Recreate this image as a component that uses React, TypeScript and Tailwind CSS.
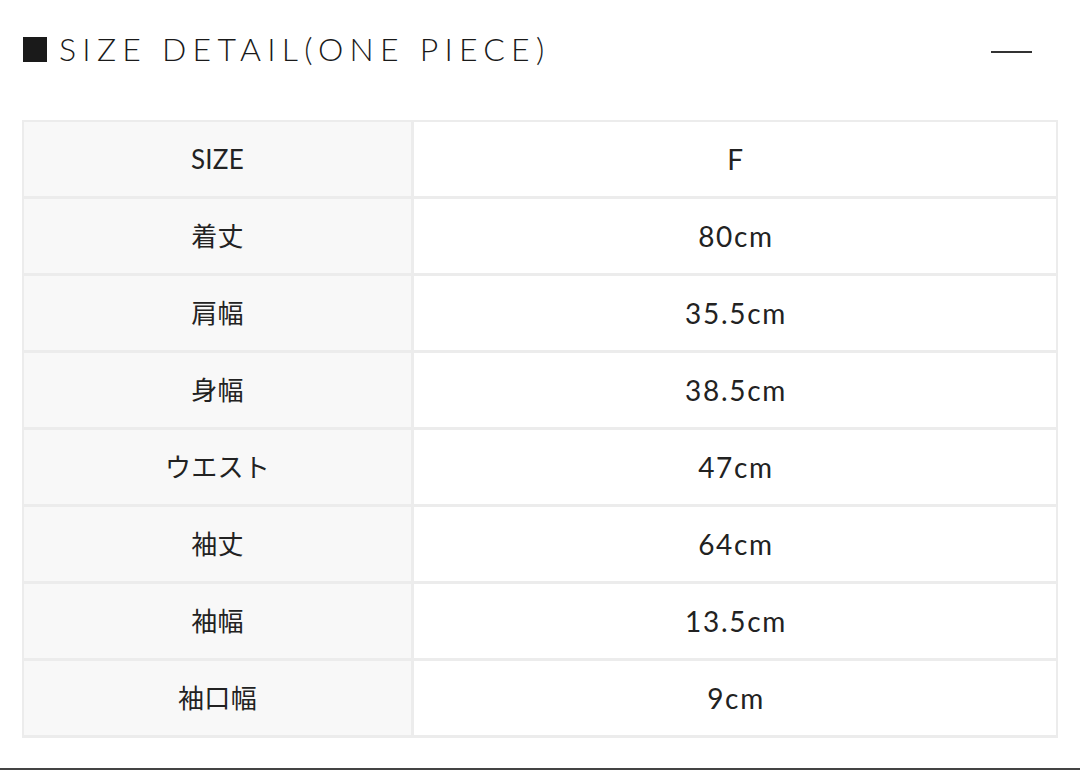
import React from "react";

const rows: [string, string][] = [
  ["SIZE", "F"],
  ["着丈", "80cm"],
  ["肩幅", "35.5cm"],
  ["身幅", "38.5cm"],
  ["ウエスト", "47cm"],
  ["袖丈", "64cm"],
  ["袖幅", "13.5cm"],
  ["袖口幅", "9cm"],
];

export default function App() {
  return (
    <div
      className="w-[1080px] h-[770px] bg-white relative overflow-hidden text-[#222]"
      style={{ fontFamily: '"Lato", "Noto Sans CJK JP", sans-serif' }}
    >
      <div className="flex items-center h-[96px] pl-[23px] pr-[48px]">
        <div className="w-[24px] h-[25px] bg-[#1a1a1a] mt-[2px]" />
        <div className="ml-[12px] text-[32px] font-light tracking-[0.195em] leading-none text-[#1a1a1a] mt-[2px]">
          SIZE DETAIL(ONE PIECE)
        </div>
        <div className="flex-1" />
        <div className="w-[41px] h-[2px] bg-[#333] mt-[8px]" />
      </div>
      <div className="mx-[22px] mt-[24px] border-[2px] border-[#ececec] border-b-0">
        {rows.map(([k, v], i) => (
          <div key={i} className="flex h-[77px] border-b-[3px] border-[#ececec]">
            <div className="w-[390px] bg-[#f8f8f8] border-r-[3px] border-[#ececec] flex items-center justify-center text-[26px] font-normal tracking-[0.01em]">
              {k}
            </div>
            <div className="flex-1 flex items-center justify-center text-[28px] font-normal tracking-[0.06em] pl-[2px]">
              {v}
            </div>
          </div>
        ))}
      </div>
      <div className="absolute left-0 right-0 bottom-0 h-[2px] bg-[#444]" />
    </div>
  );
}
